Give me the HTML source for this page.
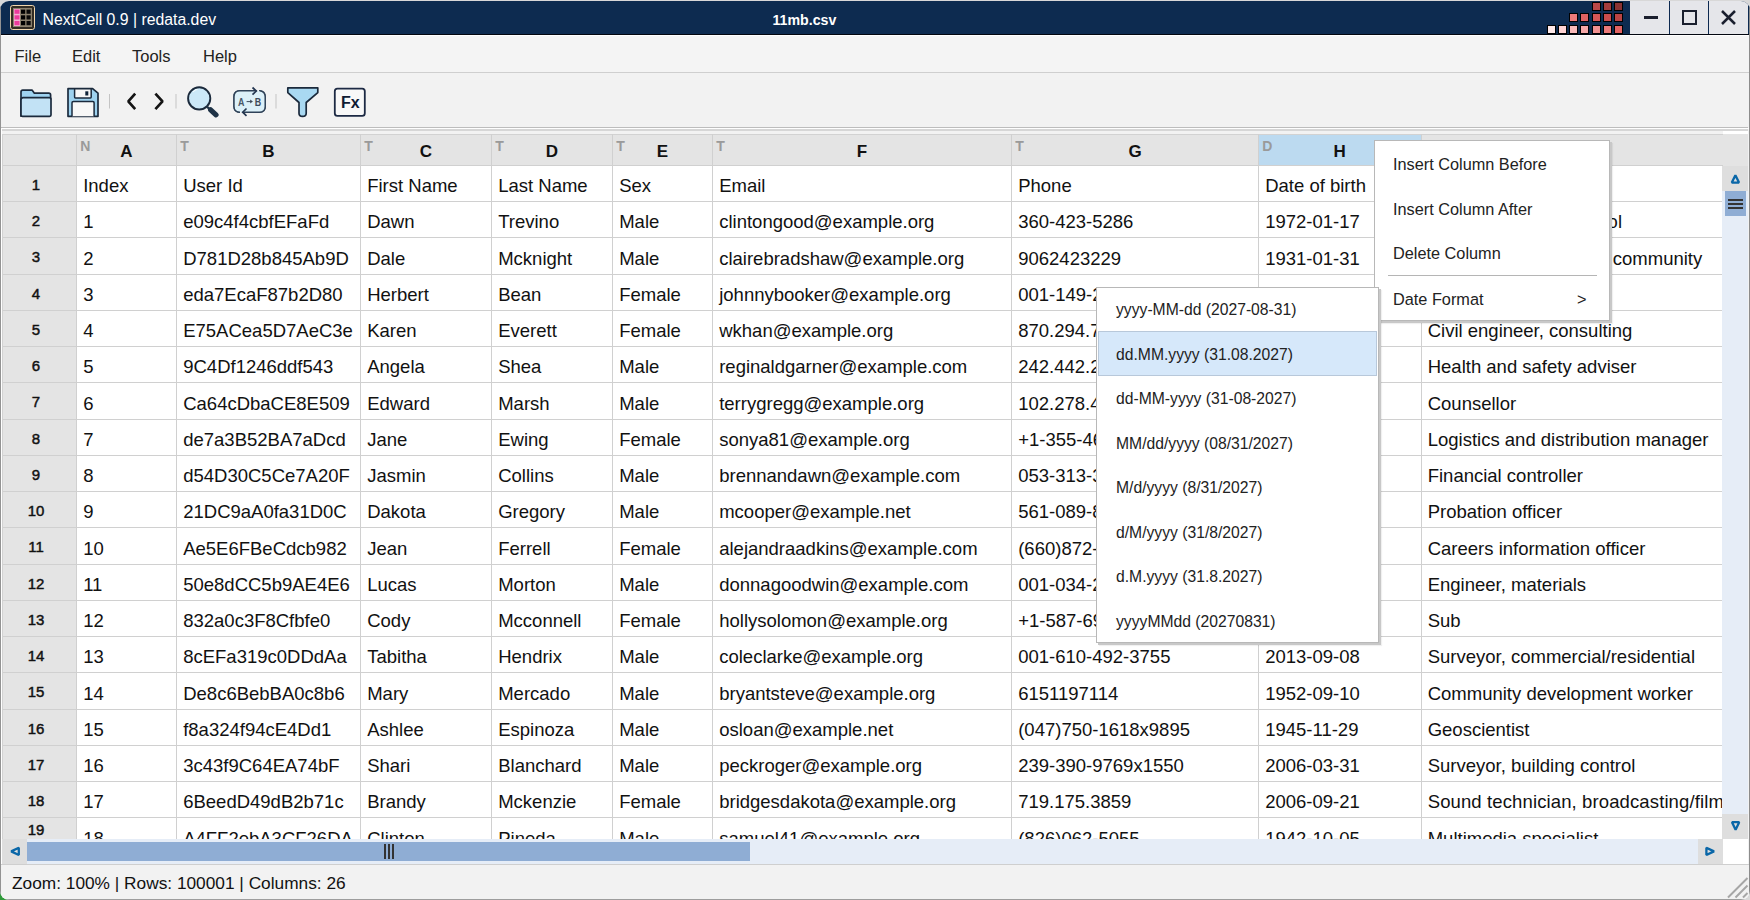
<!DOCTYPE html>
<html><head><meta charset="utf-8">
<style>
*{margin:0;padding:0;box-sizing:border-box}
html,body{width:1750px;height:900px;overflow:hidden;background:#d8d8d8;font-family:"Liberation Sans",sans-serif}
.abs{position:absolute}
#win{position:absolute;left:0;top:0;width:1750px;height:900px;background:#f2f2f2;clip-path:inset(1px 0 0 0 round 9px 9px 9px 9px)}
#title{position:absolute;left:0;top:0;width:1750px;height:34px;background:#0d2b50}
#tline{position:absolute;left:0;top:34px;width:1750px;height:1px;background:#03060f;box-shadow:0 1px 0 #fff}
#menubar{position:absolute;left:1px;top:36px;width:1748px;height:37px;background:#f4f4f4;border-bottom:1px solid #cfcfcf}
.menu{position:absolute;top:47px;font-size:16.5px;color:#222}
#toolbar{position:absolute;left:0px;top:73px;width:1748px;height:55px;background:#f2f2f2;border-bottom:1px solid #bdbdbd}
.gridwrap{position:absolute;left:0;top:0}
.hl{left:2px;width:1721px;height:1px;background:#d0d0d0}
.vl{top:134px;width:1px;height:705px;background:#d0d0d0}
.hdr{text-align:center;font-weight:bold;font-size:17px;color:#111;line-height:34px}
.typ{font-weight:bold;font-size:14px;color:#9a9a9a;line-height:14px}
.rn{left:-1px;width:74px;text-align:center;font-weight:normal;-webkit-text-stroke:0.45px #111;font-size:15px;color:#111;line-height:36px}
.cell{padding-left:6.2px;font-size:18.5px;color:#111;line-height:36px;white-space:nowrap;overflow:hidden}
.ctx{position:absolute;background:#fff;border:1px solid #b8b8b8;box-shadow:2px 2px 0 #c8c8c8,3px 3px 1px rgba(0,0,0,0.06)}
.mi{position:absolute;font-size:16.3px;color:#222;white-space:nowrap}
.si{position:absolute;left:19px;font-size:15.7px;color:#222;white-space:nowrap}
</style></head><body>
<div class="abs" style="left:0;top:860px;width:14px;height:40px;background:#2f9a3a"></div>
<div class="abs" style="left:14px;top:897px;width:700px;height:3px;background:linear-gradient(90deg,#2a8a6a,#5a3a9a,#a03060)"></div>
<div id="win">
<div id="title">
  <svg class="abs" style="left:0;top:0" width="40" height="36" viewBox="0 0 40 36">
    <rect x="10.5" y="5.5" width="24" height="24" rx="2.2" fill="#322c23" stroke="#f0d6ad" stroke-width="1"/>
    <rect x="13" y="8" width="19" height="19" fill="#8a806d"/>
    <rect x="14" y="9" width="6" height="17" fill="#f4b0d2"/>
    <rect x="14.5" y="9.6" width="5" height="4.2" fill="#ec3a9c"/><rect x="14.5" y="15.3" width="5" height="4.2" fill="#ec3a9c"/><rect x="14.5" y="21" width="5" height="4.2" fill="#ec3a9c"/>
    <rect x="21" y="9.6" width="4.2" height="4.2" fill="#000"/><rect x="21" y="15.3" width="4.2" height="4.2" fill="#000"/><rect x="21" y="21" width="4.2" height="4.2" fill="#000"/>
    <rect x="26.5" y="9.6" width="4.2" height="4.2" fill="#0a0a0a"/><rect x="26.5" y="15.3" width="4.2" height="4.2" fill="#0a0a0a"/><rect x="26.5" y="21" width="4.2" height="4.2" fill="#0a0a0a"/>
  </svg>
  <div class="abs" style="left:42.5px;top:11px;font-size:15.8px;color:#fff;white-space:nowrap">NextCell 0.9 | redata.dev</div>
  <div class="abs" style="left:772.5px;top:12px;font-size:14.2px;font-weight:bold;color:#fff;white-space:nowrap">11mb.csv</div>
  <div class="abs" style="left:1591.5px;top:2.3px;width:9px;height:9px;background:#b94848;border:1.3px solid #000"></div>
<div class="abs" style="left:1602.5px;top:2.3px;width:9px;height:9px;background:#a23d3d;border:1.3px solid #000"></div>
<div class="abs" style="left:1613.6px;top:2.3px;width:9px;height:9px;background:#8a3333;border:1.3px solid #000"></div>
<div class="abs" style="left:1569.3px;top:13.4px;width:9px;height:9px;background:#f07a7a;border:1.3px solid #000"></div>
<div class="abs" style="left:1580.4px;top:13.4px;width:9px;height:9px;background:#e06262;border:1.3px solid #000"></div>
<div class="abs" style="left:1591.5px;top:13.4px;width:9px;height:9px;background:#d55656;border:1.3px solid #000"></div>
<div class="abs" style="left:1602.5px;top:13.4px;width:9px;height:9px;background:#c84c4c;border:1.3px solid #000"></div>
<div class="abs" style="left:1613.6px;top:13.4px;width:9px;height:9px;background:#b94444;border:1.3px solid #000"></div>
<div class="abs" style="left:1547.2px;top:24.8px;width:9px;height:9px;background:#ffeaea;border:1.3px solid #000"></div>
<div class="abs" style="left:1558.3px;top:24.8px;width:9px;height:9px;background:#ffd4d4;border:1.3px solid #000"></div>
<div class="abs" style="left:1569.3px;top:24.8px;width:9px;height:9px;background:#f9b9b9;border:1.3px solid #000"></div>
<div class="abs" style="left:1580.4px;top:24.8px;width:9px;height:9px;background:#f5a7a7;border:1.3px solid #000"></div>
<div class="abs" style="left:1591.5px;top:24.8px;width:9px;height:9px;background:#f09090;border:1.3px solid #000"></div>
<div class="abs" style="left:1602.5px;top:24.8px;width:9px;height:9px;background:#ec7a7a;border:1.3px solid #000"></div>
<div class="abs" style="left:1613.6px;top:24.8px;width:9px;height:9px;background:#e26363;border:1.3px solid #000"></div>
  <div class="abs" style="left:1630px;top:0;width:118px;height:34px;background:#e5e6ea"></div>
  <div class="abs" style="left:1669px;top:0;width:1px;height:34px;background:#0c2950"></div>
  <div class="abs" style="left:1708px;top:0;width:1px;height:34px;background:#0c2950"></div>
  <div class="abs" style="left:1644px;top:16px;width:14px;height:2.5px;background:#1a1f2e"></div>
  <div class="abs" style="left:1682px;top:10px;width:15px;height:15px;border:2.5px solid #1a1f2e"></div>
  <svg class="abs" style="left:1721px;top:10px" width="15" height="15" viewBox="0 0 15 15"><path d="M1 1L14 14M14 1L1 14" stroke="#1a1f2e" stroke-width="2.5"/></svg>
</div>
<div id="tline"></div>
<div id="menubar"></div>
<div class="menu" style="left:14.5px">File</div>
<div class="menu" style="left:72px">Edit</div>
<div class="menu" style="left:132px">Tools</div>
<div class="menu" style="left:203px">Help</div>
<div id="toolbar"></div>

<svg class="abs" style="left:0;top:0" width="380" height="130" viewBox="0 0 380 130">
 <!-- folder -->
 <path d="M21 115.5 V92 Q21 90.2 22.8 90.2 H32.2 L34.4 93.2 H48.8 Q50.6 93.2 50.6 95 V99 H21 Z" fill="#9fd3f0" stroke="#1b2a3c" stroke-width="1.7" stroke-linejoin="round"/>
 <path d="M21 116.2 V100 Q21 97.6 23 97.6 H49.4 Q51 97.6 51 99.4 V115 Q51 116.3 49.6 116.3 H22.4 Q21 116.3 21 115 Z" fill="#c2e2f5" stroke="#1b2a3c" stroke-width="1.7" stroke-linejoin="round"/>
 <!-- save -->
 <path d="M68 88.7 H92.6 L98 93.2 V116.3 H68 Z" fill="#9ed2ef" stroke="#1b2a3c" stroke-width="1.7" stroke-linejoin="round"/>
 <rect x="74.6" y="88.7" width="16.6" height="9.2" rx="0.8" fill="#f7f7f7" stroke="#1b2a3c" stroke-width="1.5"/>
 <rect x="85.3" y="91.3" width="3" height="4.2" fill="#10243a"/>
 <path d="M72 116.3 V102.8 Q72 101.6 73.4 101.6 H92.8 Q94.1 101.6 94.1 102.8 V116.3" fill="#f7f7f7" stroke="#1b2a3c" stroke-width="1.5"/>
 <!-- separators -->
 <rect x="109" y="94" width="1" height="14.5" fill="#c4c4c4"/>
 <rect x="175.5" y="94" width="1" height="14.5" fill="#c4c4c4"/>
 <rect x="275.5" y="94" width="1" height="14.5" fill="#c4c4c4"/>
 <!-- chevrons -->
 <path d="M135.2 93.6 L128.3 101.4 L135.2 109.2" fill="none" stroke="#151515" stroke-width="2.7" stroke-linejoin="bevel"/>
 <path d="M155.4 93.6 L162.5 101.4 L155.4 109.2" fill="none" stroke="#151515" stroke-width="2.7" stroke-linejoin="bevel"/>
 <!-- magnifier -->
 <circle cx="199.2" cy="98.4" r="11.1" fill="#cbe8f8" stroke="#1b2a3c" stroke-width="1.9"/>
 <path d="M193 92 Q195 89.6 197.5 89.3" fill="none" stroke="#fff" stroke-width="1" opacity="0.9"/>
 <path d="M206.8 106.6 L210 109.4" stroke="#1e3246" stroke-width="2.2"/><path d="M210.6 109.8 L216 114.8" stroke="#1e3246" stroke-width="5.2" stroke-linecap="round"/>
 <!-- replace -->
 <path d="M256.5 90.8 H240 Q234 90.8 234 96.8 V106.5 Q234 112.2 240 112.2" fill="none" stroke="#2f4258" stroke-width="1.45"/>
 <path d="M242.8 112.2 H259.4 Q265.2 112.2 265.2 106.5 V96.8 Q265.2 90.8 259 90.6" fill="none" stroke="#2f4258" stroke-width="1.45"/>
 <path d="M240 90.8 H256.5 Q258.6 90.8 259.6 91.2 Q265.2 92.5 265.2 96.8 V106.5 Q265.2 112.2 259.4 112.2 H242.8 Q234 112.2 234 106.5 V96.8 Q234 90.8 240 90.8Z" fill="#dcf0f8" stroke="none"/>
 <path d="M256.5 90.8 H240 Q234 90.8 234 96.8 V106.5 Q234 112.2 240 112.2" fill="none" stroke="#2f4258" stroke-width="1.45"/>
 <path d="M243 112.2 H259.4 Q265.2 112.2 265.2 106.5 V96.8 Q265.2 91.5 259.5 90.6" fill="none" stroke="#2f4258" stroke-width="1.45"/>
 <path d="M252.5 87.5 L256.3 91 L252.5 94.6" fill="none" stroke="#243650" stroke-width="1.7"/>
 <path d="M246.5 108.5 L242.7 112.2 L246.5 115.8" fill="none" stroke="#243650" stroke-width="1.7"/>
 <text x="241.2" y="105.9" font-family="Liberation Sans" font-weight="bold" font-size="10.5" fill="#4a5868" text-anchor="middle" transform="translate(241.2 0) scale(0.85 1) translate(-241.2 0)">A</text>
 <text x="258" y="105.9" font-family="Liberation Sans" font-weight="bold" font-size="10.5" fill="#3d4a5a" text-anchor="middle" transform="translate(258 0) scale(0.85 1) translate(-258 0)">B</text>
 <path d="M246.6 101.6 H252.2" fill="none" stroke="#3d4a5a" stroke-width="1"/><path d="M250.2 99.6 L252.8 101.6 L250.2 103.6Z" fill="#3d4a5a"/>
 <!-- filter -->
 <path d="M287.8 87.8 H317.8 V92.6 L306.2 102.5 V113.2 Q306.2 116.4 302.6 116.4 Q299 116.4 299 113.2 V102.5 L287.8 92.6 Z" fill="#a9d9f2" stroke="#1b2a3c" stroke-width="1.7" stroke-linejoin="round"/>
 <!-- fx -->
 <rect x="334.8" y="88.7" width="30" height="27.2" rx="2.6" fill="#f8f8f8" stroke="#1d2a44" stroke-width="1.8"/>
 <text x="341" y="107.8" font-family="Liberation Sans" font-weight="bold" font-size="16" fill="#0f1b33">Fx</text>
</svg>
<div class="abs" style="left:1px;top:128px;width:1748px;height:1px;background:#fff"></div>
<div class="abs" style="left:2px;top:129px;width:1746px;height:2px;background:#d6d6d6"></div>
<div class="gridwrap">
<div class="abs" style="left:2px;top:134px;width:1746px;height:32px;background:#e4e4e4"></div>
<div class="abs" style="left:2px;top:134px;width:1721px;height:1px;background:#d2d2d2"></div>
<div class="abs" style="left:1723px;top:131px;width:25px;height:3px;background:#fff"></div>
<div class="abs" style="left:1259.0px;top:135px;width:162.0px;height:30.5px;background:#bcdaf0"></div>
<div class="abs" style="left:2px;top:166px;width:74.5px;height:673px;background:#e4e4e4"></div>
<div class="abs" style="left:77px;top:166px;width:1646px;height:673px;background:#fff"></div>
<div class="abs hl" style="top:164.90px;"></div>
<div class="abs hl" style="top:201.15px;"></div>
<div class="abs hl" style="top:237.40px;"></div>
<div class="abs hl" style="top:273.65px;"></div>
<div class="abs hl" style="top:309.90px;"></div>
<div class="abs hl" style="top:346.15px;"></div>
<div class="abs hl" style="top:382.40px;"></div>
<div class="abs hl" style="top:418.65px;"></div>
<div class="abs hl" style="top:454.90px;"></div>
<div class="abs hl" style="top:491.15px;"></div>
<div class="abs hl" style="top:527.40px;"></div>
<div class="abs hl" style="top:563.65px;"></div>
<div class="abs hl" style="top:599.90px;"></div>
<div class="abs hl" style="top:636.15px;"></div>
<div class="abs hl" style="top:672.40px;"></div>
<div class="abs hl" style="top:708.65px;"></div>
<div class="abs hl" style="top:744.90px;"></div>
<div class="abs hl" style="top:781.15px;"></div>
<div class="abs hl" style="top:817.40px;"></div>
<div class="abs vl" style="left:76.00px;"></div>
<div class="abs vl" style="left:176.00px;"></div>
<div class="abs vl" style="left:360.00px;"></div>
<div class="abs vl" style="left:491.00px;"></div>
<div class="abs vl" style="left:612.00px;"></div>
<div class="abs vl" style="left:712.00px;"></div>
<div class="abs vl" style="left:1011.00px;"></div>
<div class="abs vl" style="left:1258.00px;"></div>
<div class="abs vl" style="left:1420.50px;"></div>
<div class="abs" style="left:2px;top:134px;width:1px;height:705px;background:#d2d2d2"></div>
<div class="abs hdr" style="left:76.5px;width:100.0px;top:135px;">A</div>
<div class="abs typ" style="left:80.3px;top:139px;">N</div>
<div class="abs hdr" style="left:176.5px;width:184.0px;top:135px;">B</div>
<div class="abs typ" style="left:180.3px;top:139px;">T</div>
<div class="abs hdr" style="left:360.5px;width:131.0px;top:135px;">C</div>
<div class="abs typ" style="left:364.3px;top:139px;">T</div>
<div class="abs hdr" style="left:491.5px;width:121.0px;top:135px;">D</div>
<div class="abs typ" style="left:495.3px;top:139px;">T</div>
<div class="abs hdr" style="left:612.5px;width:100.0px;top:135px;">E</div>
<div class="abs typ" style="left:616.3px;top:139px;">T</div>
<div class="abs hdr" style="left:712.5px;width:299.0px;top:135px;">F</div>
<div class="abs typ" style="left:716.3px;top:139px;">T</div>
<div class="abs hdr" style="left:1011.5px;width:247.0px;top:135px;">G</div>
<div class="abs typ" style="left:1015.3px;top:139px;">T</div>
<div class="abs hdr" style="left:1258.5px;width:162.5px;top:135px;">H</div>
<div class="abs typ" style="left:1262.3px;top:139px;">D</div>
<div class="abs hdr" style="left:1421px;width:302px;top:135px;">I</div>
<div class="abs typ" style="left:1424.8px;top:139px;">T</div>
<div class="abs rn" style="top:166.90px;">1</div>
<div class="abs rn" style="top:203.15px;">2</div>
<div class="abs rn" style="top:239.40px;">3</div>
<div class="abs rn" style="top:275.65px;">4</div>
<div class="abs rn" style="top:311.90px;">5</div>
<div class="abs rn" style="top:348.15px;">6</div>
<div class="abs rn" style="top:384.40px;">7</div>
<div class="abs rn" style="top:420.65px;">8</div>
<div class="abs rn" style="top:456.90px;">9</div>
<div class="abs rn" style="top:493.15px;">10</div>
<div class="abs rn" style="top:529.40px;">11</div>
<div class="abs rn" style="top:565.65px;">12</div>
<div class="abs rn" style="top:601.90px;">13</div>
<div class="abs rn" style="top:638.15px;">14</div>
<div class="abs rn" style="top:674.40px;">15</div>
<div class="abs rn" style="top:710.65px;">16</div>
<div class="abs rn" style="top:746.90px;">17</div>
<div class="abs rn" style="top:783.15px;">18</div>
<div class="abs rn" style="top:812.00px;">19</div>
<div class="abs cell" style="left:77.0px;top:168.10px;width:99.0px;">Index</div>
<div class="abs cell" style="left:177.0px;top:168.10px;width:183.0px;">User Id</div>
<div class="abs cell" style="left:361.0px;top:168.10px;width:130.0px;">First Name</div>
<div class="abs cell" style="left:492.0px;top:168.10px;width:120.0px;">Last Name</div>
<div class="abs cell" style="left:613.0px;top:168.10px;width:99.0px;">Sex</div>
<div class="abs cell" style="left:713.0px;top:168.10px;width:298.0px;">Email</div>
<div class="abs cell" style="left:1012.0px;top:168.10px;width:246.0px;">Phone</div>
<div class="abs cell" style="left:1259.0px;top:168.10px;width:161.5px;">Date of birth</div>
<div class="abs cell" style="left:1421.5px;top:168.10px;width:301px;">Job Title</div>
<div class="abs cell" style="left:77.0px;top:204.35px;width:99.0px;">1</div>
<div class="abs cell" style="left:177.0px;top:204.35px;width:183.0px;">e09c4f4cbfEFaFd</div>
<div class="abs cell" style="left:361.0px;top:204.35px;width:130.0px;">Dawn</div>
<div class="abs cell" style="left:492.0px;top:204.35px;width:120.0px;">Trevino</div>
<div class="abs cell" style="left:613.0px;top:204.35px;width:99.0px;">Male</div>
<div class="abs cell" style="left:713.0px;top:204.35px;width:298.0px;">clintongood@example.org</div>
<div class="abs cell" style="left:1012.0px;top:204.35px;width:246.0px;">360-423-5286</div>
<div class="abs cell" style="left:1259.0px;top:204.35px;width:161.5px;">1972-01-17</div>
<div class="abs cell" style="left:1421.5px;top:204.35px;width:301px;letter-spacing:0.14px;">Teacher, special school</div>
<div class="abs cell" style="left:77.0px;top:240.60px;width:99.0px;">2</div>
<div class="abs cell" style="left:177.0px;top:240.60px;width:183.0px;">D781D28b845Ab9D</div>
<div class="abs cell" style="left:361.0px;top:240.60px;width:130.0px;">Dale</div>
<div class="abs cell" style="left:492.0px;top:240.60px;width:120.0px;">Mcknight</div>
<div class="abs cell" style="left:613.0px;top:240.60px;width:99.0px;">Male</div>
<div class="abs cell" style="left:713.0px;top:240.60px;width:298.0px;">clairebradshaw@example.org</div>
<div class="abs cell" style="left:1012.0px;top:240.60px;width:246.0px;">9062423229</div>
<div class="abs cell" style="left:1259.0px;top:240.60px;width:161.5px;">1931-01-31</div>
<div class="abs cell" style="left:1421.5px;top:240.60px;width:301px;">Psychotherapist, child community</div>
<div class="abs cell" style="left:77.0px;top:276.85px;width:99.0px;">3</div>
<div class="abs cell" style="left:177.0px;top:276.85px;width:183.0px;">eda7EcaF87b2D80</div>
<div class="abs cell" style="left:361.0px;top:276.85px;width:130.0px;">Herbert</div>
<div class="abs cell" style="left:492.0px;top:276.85px;width:120.0px;">Bean</div>
<div class="abs cell" style="left:613.0px;top:276.85px;width:99.0px;">Female</div>
<div class="abs cell" style="left:713.0px;top:276.85px;width:298.0px;">johnnybooker@example.org</div>
<div class="abs cell" style="left:1012.0px;top:276.85px;width:246.0px;">001-149-244-6133</div>
<div class="abs cell" style="left:1259.0px;top:276.85px;width:161.5px;">1987-03-09</div>
<div class="abs cell" style="left:1421.5px;top:276.85px;width:301px;">Pharmacist</div>
<div class="abs cell" style="left:77.0px;top:313.10px;width:99.0px;">4</div>
<div class="abs cell" style="left:177.0px;top:313.10px;width:183.0px;">E75ACea5D7AeC3e</div>
<div class="abs cell" style="left:361.0px;top:313.10px;width:130.0px;">Karen</div>
<div class="abs cell" style="left:492.0px;top:313.10px;width:120.0px;">Everett</div>
<div class="abs cell" style="left:613.0px;top:313.10px;width:99.0px;">Female</div>
<div class="abs cell" style="left:713.0px;top:313.10px;width:298.0px;">wkhan@example.org</div>
<div class="abs cell" style="left:1012.0px;top:313.10px;width:246.0px;">870.294.7513</div>
<div class="abs cell" style="left:1259.0px;top:313.10px;width:161.5px;">1996-10-14</div>
<div class="abs cell" style="left:1421.5px;top:313.10px;width:301px;">Civil engineer, consulting</div>
<div class="abs cell" style="left:77.0px;top:349.35px;width:99.0px;">5</div>
<div class="abs cell" style="left:177.0px;top:349.35px;width:183.0px;">9C4Df1246ddf543</div>
<div class="abs cell" style="left:361.0px;top:349.35px;width:130.0px;">Angela</div>
<div class="abs cell" style="left:492.0px;top:349.35px;width:120.0px;">Shea</div>
<div class="abs cell" style="left:613.0px;top:349.35px;width:99.0px;">Male</div>
<div class="abs cell" style="left:713.0px;top:349.35px;width:298.0px;">reginaldgarner@example.com</div>
<div class="abs cell" style="left:1012.0px;top:349.35px;width:246.0px;">242.442.2093</div>
<div class="abs cell" style="left:1259.0px;top:349.35px;width:161.5px;">1912-03-01</div>
<div class="abs cell" style="left:1421.5px;top:349.35px;width:301px;">Health and safety adviser</div>
<div class="abs cell" style="left:77.0px;top:385.60px;width:99.0px;">6</div>
<div class="abs cell" style="left:177.0px;top:385.60px;width:183.0px;">Ca64cDbaCE8E509</div>
<div class="abs cell" style="left:361.0px;top:385.60px;width:130.0px;">Edward</div>
<div class="abs cell" style="left:492.0px;top:385.60px;width:120.0px;">Marsh</div>
<div class="abs cell" style="left:613.0px;top:385.60px;width:99.0px;">Male</div>
<div class="abs cell" style="left:713.0px;top:385.60px;width:298.0px;">terrygregg@example.org</div>
<div class="abs cell" style="left:1012.0px;top:385.60px;width:246.0px;">102.278.4518</div>
<div class="abs cell" style="left:1259.0px;top:385.60px;width:161.5px;">1916-05-22</div>
<div class="abs cell" style="left:1421.5px;top:385.60px;width:301px;">Counsellor</div>
<div class="abs cell" style="left:77.0px;top:421.85px;width:99.0px;">7</div>
<div class="abs cell" style="left:177.0px;top:421.85px;width:183.0px;">de7a3B52BA7aDcd</div>
<div class="abs cell" style="left:361.0px;top:421.85px;width:130.0px;">Jane</div>
<div class="abs cell" style="left:492.0px;top:421.85px;width:120.0px;">Ewing</div>
<div class="abs cell" style="left:613.0px;top:421.85px;width:99.0px;">Female</div>
<div class="abs cell" style="left:713.0px;top:421.85px;width:298.0px;">sonya81@example.org</div>
<div class="abs cell" style="left:1012.0px;top:421.85px;width:246.0px;">+1-355-461-5213</div>
<div class="abs cell" style="left:1259.0px;top:421.85px;width:161.5px;">1985-04-14</div>
<div class="abs cell" style="left:1421.5px;top:421.85px;width:301px;">Logistics and distribution manager</div>
<div class="abs cell" style="left:77.0px;top:458.10px;width:99.0px;">8</div>
<div class="abs cell" style="left:177.0px;top:458.10px;width:183.0px;">d54D30C5Ce7A20F</div>
<div class="abs cell" style="left:361.0px;top:458.10px;width:130.0px;">Jasmin</div>
<div class="abs cell" style="left:492.0px;top:458.10px;width:120.0px;">Collins</div>
<div class="abs cell" style="left:613.0px;top:458.10px;width:99.0px;">Male</div>
<div class="abs cell" style="left:713.0px;top:458.10px;width:298.0px;">brennandawn@example.com</div>
<div class="abs cell" style="left:1012.0px;top:458.10px;width:246.0px;">053-313-3590</div>
<div class="abs cell" style="left:1259.0px;top:458.10px;width:161.5px;">1970-06-02</div>
<div class="abs cell" style="left:1421.5px;top:458.10px;width:301px;">Financial controller</div>
<div class="abs cell" style="left:77.0px;top:494.35px;width:99.0px;">9</div>
<div class="abs cell" style="left:177.0px;top:494.35px;width:183.0px;">21DC9aA0fa31D0C</div>
<div class="abs cell" style="left:361.0px;top:494.35px;width:130.0px;">Dakota</div>
<div class="abs cell" style="left:492.0px;top:494.35px;width:120.0px;">Gregory</div>
<div class="abs cell" style="left:613.0px;top:494.35px;width:99.0px;">Male</div>
<div class="abs cell" style="left:713.0px;top:494.35px;width:298.0px;">mcooper@example.net</div>
<div class="abs cell" style="left:1012.0px;top:494.35px;width:246.0px;">561-089-8446</div>
<div class="abs cell" style="left:1259.0px;top:494.35px;width:161.5px;">1948-12-12</div>
<div class="abs cell" style="left:1421.5px;top:494.35px;width:301px;">Probation officer</div>
<div class="abs cell" style="left:77.0px;top:530.60px;width:99.0px;">10</div>
<div class="abs cell" style="left:177.0px;top:530.60px;width:183.0px;">Ae5E6FBeCdcb982</div>
<div class="abs cell" style="left:361.0px;top:530.60px;width:130.0px;">Jean</div>
<div class="abs cell" style="left:492.0px;top:530.60px;width:120.0px;">Ferrell</div>
<div class="abs cell" style="left:613.0px;top:530.60px;width:99.0px;">Female</div>
<div class="abs cell" style="left:713.0px;top:530.60px;width:298.0px;">alejandraadkins@example.com</div>
<div class="abs cell" style="left:1012.0px;top:530.60px;width:246.0px;">(660)872-0395</div>
<div class="abs cell" style="left:1259.0px;top:530.60px;width:161.5px;">1979-05-11</div>
<div class="abs cell" style="left:1421.5px;top:530.60px;width:301px;">Careers information officer</div>
<div class="abs cell" style="left:77.0px;top:566.85px;width:99.0px;">11</div>
<div class="abs cell" style="left:177.0px;top:566.85px;width:183.0px;">50e8dCC5b9AE4E6</div>
<div class="abs cell" style="left:361.0px;top:566.85px;width:130.0px;">Lucas</div>
<div class="abs cell" style="left:492.0px;top:566.85px;width:120.0px;">Morton</div>
<div class="abs cell" style="left:613.0px;top:566.85px;width:99.0px;">Male</div>
<div class="abs cell" style="left:713.0px;top:566.85px;width:298.0px;">donnagoodwin@example.com</div>
<div class="abs cell" style="left:1012.0px;top:566.85px;width:246.0px;">001-034-298-4401</div>
<div class="abs cell" style="left:1259.0px;top:566.85px;width:161.5px;">1938-08-25</div>
<div class="abs cell" style="left:1421.5px;top:566.85px;width:301px;">Engineer, materials</div>
<div class="abs cell" style="left:77.0px;top:603.10px;width:99.0px;">12</div>
<div class="abs cell" style="left:177.0px;top:603.10px;width:183.0px;">832a0c3F8Cfbfe0</div>
<div class="abs cell" style="left:361.0px;top:603.10px;width:130.0px;">Cody</div>
<div class="abs cell" style="left:492.0px;top:603.10px;width:120.0px;">Mcconnell</div>
<div class="abs cell" style="left:613.0px;top:603.10px;width:99.0px;">Female</div>
<div class="abs cell" style="left:713.0px;top:603.10px;width:298.0px;">hollysolomon@example.org</div>
<div class="abs cell" style="left:1012.0px;top:603.10px;width:246.0px;">+1-587-690-8231</div>
<div class="abs cell" style="left:1259.0px;top:603.10px;width:161.5px;">1934-02-04</div>
<div class="abs cell" style="left:1421.5px;top:603.10px;width:301px;">Sub</div>
<div class="abs cell" style="left:77.0px;top:639.35px;width:99.0px;">13</div>
<div class="abs cell" style="left:177.0px;top:639.35px;width:183.0px;">8cEFa319c0DDdAa</div>
<div class="abs cell" style="left:361.0px;top:639.35px;width:130.0px;">Tabitha</div>
<div class="abs cell" style="left:492.0px;top:639.35px;width:120.0px;">Hendrix</div>
<div class="abs cell" style="left:613.0px;top:639.35px;width:99.0px;">Male</div>
<div class="abs cell" style="left:713.0px;top:639.35px;width:298.0px;">coleclarke@example.org</div>
<div class="abs cell" style="left:1012.0px;top:639.35px;width:246.0px;">001-610-492-3755</div>
<div class="abs cell" style="left:1259.0px;top:639.35px;width:161.5px;">2013-09-08</div>
<div class="abs cell" style="left:1421.5px;top:639.35px;width:301px;">Surveyor, commercial/residential</div>
<div class="abs cell" style="left:77.0px;top:675.60px;width:99.0px;">14</div>
<div class="abs cell" style="left:177.0px;top:675.60px;width:183.0px;">De8c6BebBA0c8b6</div>
<div class="abs cell" style="left:361.0px;top:675.60px;width:130.0px;">Mary</div>
<div class="abs cell" style="left:492.0px;top:675.60px;width:120.0px;">Mercado</div>
<div class="abs cell" style="left:613.0px;top:675.60px;width:99.0px;">Male</div>
<div class="abs cell" style="left:713.0px;top:675.60px;width:298.0px;">bryantsteve@example.org</div>
<div class="abs cell" style="left:1012.0px;top:675.60px;width:246.0px;">6151197114</div>
<div class="abs cell" style="left:1259.0px;top:675.60px;width:161.5px;">1952-09-10</div>
<div class="abs cell" style="left:1421.5px;top:675.60px;width:301px;">Community development worker</div>
<div class="abs cell" style="left:77.0px;top:711.85px;width:99.0px;">15</div>
<div class="abs cell" style="left:177.0px;top:711.85px;width:183.0px;">f8a324f94cE4Dd1</div>
<div class="abs cell" style="left:361.0px;top:711.85px;width:130.0px;">Ashlee</div>
<div class="abs cell" style="left:492.0px;top:711.85px;width:120.0px;">Espinoza</div>
<div class="abs cell" style="left:613.0px;top:711.85px;width:99.0px;">Male</div>
<div class="abs cell" style="left:713.0px;top:711.85px;width:298.0px;">osloan@example.net</div>
<div class="abs cell" style="left:1012.0px;top:711.85px;width:246.0px;">(047)750-1618x9895</div>
<div class="abs cell" style="left:1259.0px;top:711.85px;width:161.5px;">1945-11-29</div>
<div class="abs cell" style="left:1421.5px;top:711.85px;width:301px;">Geoscientist</div>
<div class="abs cell" style="left:77.0px;top:748.10px;width:99.0px;">16</div>
<div class="abs cell" style="left:177.0px;top:748.10px;width:183.0px;">3c43f9C64EA74bF</div>
<div class="abs cell" style="left:361.0px;top:748.10px;width:130.0px;">Shari</div>
<div class="abs cell" style="left:492.0px;top:748.10px;width:120.0px;">Blanchard</div>
<div class="abs cell" style="left:613.0px;top:748.10px;width:99.0px;">Male</div>
<div class="abs cell" style="left:713.0px;top:748.10px;width:298.0px;">peckroger@example.org</div>
<div class="abs cell" style="left:1012.0px;top:748.10px;width:246.0px;">239-390-9769x1550</div>
<div class="abs cell" style="left:1259.0px;top:748.10px;width:161.5px;">2006-03-31</div>
<div class="abs cell" style="left:1421.5px;top:748.10px;width:301px;">Surveyor, building control</div>
<div class="abs cell" style="left:77.0px;top:784.35px;width:99.0px;">17</div>
<div class="abs cell" style="left:177.0px;top:784.35px;width:183.0px;">6BeedD49dB2b71c</div>
<div class="abs cell" style="left:361.0px;top:784.35px;width:130.0px;">Brandy</div>
<div class="abs cell" style="left:492.0px;top:784.35px;width:120.0px;">Mckenzie</div>
<div class="abs cell" style="left:613.0px;top:784.35px;width:99.0px;">Female</div>
<div class="abs cell" style="left:713.0px;top:784.35px;width:298.0px;">bridgesdakota@example.org</div>
<div class="abs cell" style="left:1012.0px;top:784.35px;width:246.0px;">719.175.3859</div>
<div class="abs cell" style="left:1259.0px;top:784.35px;width:161.5px;">2006-09-21</div>
<div class="abs cell" style="left:1421.5px;top:784.35px;width:301px;letter-spacing:0.12px;">Sound technician, broadcasting/film</div>
<div class="abs cell" style="left:77.0px;top:820.60px;width:99.0px;">18</div>
<div class="abs cell" style="left:177.0px;top:820.60px;width:183.0px;">A4FF2ebA3CF26DA</div>
<div class="abs cell" style="left:361.0px;top:820.60px;width:130.0px;">Clinton</div>
<div class="abs cell" style="left:492.0px;top:820.60px;width:120.0px;">Pineda</div>
<div class="abs cell" style="left:613.0px;top:820.60px;width:99.0px;">Male</div>
<div class="abs cell" style="left:713.0px;top:820.60px;width:298.0px;">samuel41@example.org</div>
<div class="abs cell" style="left:1012.0px;top:820.60px;width:246.0px;">(826)062-5055</div>
<div class="abs cell" style="left:1259.0px;top:820.60px;width:161.5px;">1942-10-05</div>
<div class="abs cell" style="left:1421.5px;top:820.60px;width:301px;">Multimedia specialist</div>
</div>
<!-- vertical scrollbar -->
<div class="abs" style="left:1722px;top:166px;width:26px;height:673px;background:#e6edf7"></div>
<div class="abs" style="left:1722px;top:166px;width:26px;height:25px;background:#dedede"></div>

<div class="abs" style="left:1724.5px;top:191px;width:21px;height:25px;background:#8fadd4"></div>
<div class="abs" style="left:1728px;top:198.5px;width:15px;height:2px;background:#333"></div>
<div class="abs" style="left:1728px;top:202.5px;width:15px;height:2px;background:#333"></div>
<div class="abs" style="left:1728px;top:206.5px;width:15px;height:2px;background:#333"></div>
<div class="abs" style="left:1722px;top:814px;width:26px;height:25px;background:#dedede"></div>

<!-- horizontal scrollbar -->
<div class="abs" style="left:2px;top:839px;width:1721px;height:25px;background:#e6edf7"></div>
<div class="abs" style="left:2px;top:839px;width:25px;height:25px;background:#dedede"></div>

<div class="abs" style="left:27px;top:842px;width:723px;height:19px;background:#8fadd4"></div>
<div class="abs" style="left:384px;top:844px;width:2px;height:15px;background:#333"></div>
<div class="abs" style="left:388px;top:844px;width:2px;height:15px;background:#333"></div>
<div class="abs" style="left:391.5px;top:844px;width:2px;height:15px;background:#333"></div>
<div class="abs" style="left:1698px;top:839px;width:25px;height:25px;background:#dedede"></div>

<div class="abs" style="left:1723px;top:839px;width:25px;height:25px;background:#fff"></div>
<!-- status bar -->
<div class="abs" style="left:1px;top:864px;width:1748px;height:1px;background:#cfcfcf"></div>
<div class="abs" style="left:1px;top:865px;width:1748px;height:34px;background:#f2f2f2"></div>
<div class="abs" style="left:12px;top:873px;font-size:17.3px;color:#111;white-space:nowrap">Zoom: 100% | Rows: 100001 | Columns: 26</div>
<svg class="abs" style="left:0;top:0" width="1750" height="900" viewBox="0 0 1750 900">
 <g fill="none" stroke="#0a67a8" stroke-width="2.3" stroke-linejoin="bevel">
  <path d="M1735.4 175.2 L1739 182.6 H1731.8 Z"/>
  <path d="M1735.6 829.8 L1739.2 822.2 H1732 Z"/>
  <path d="M11.2 851.4 L18.8 847.8 V855 Z"/>
  <path d="M1714 851.4 L1706.4 847.8 V855 Z"/>
 </g>
 <g stroke="#a6a6a6" stroke-width="2">
  <path d="M1728 897.5 L1747.5 878"/><path d="M1735.5 897.5 L1747.5 885.5"/><path d="M1743 897.5 L1747.5 893"/>
 </g>
</svg>
<div class="abs" style="left:0;top:0;width:1px;height:900px;background:#939393"></div>
<div class="abs" style="left:1749px;top:0;width:1px;height:900px;background:#8c8c8c"></div>
<div class="abs" style="left:0;top:899px;width:1750px;height:1px;background:#9d9d9d"></div>
<div class="abs" style="left:1px;top:128px;width:1px;height:736px;background:#fff"></div>
<!-- context menu -->
<div class="ctx" style="left:1374px;top:140px;width:236px;height:181px"></div>
<div class="mi" style="left:1393px;top:155px">Insert Column Before</div>
<div class="mi" style="left:1393px;top:200px">Insert Column After</div>
<div class="mi" style="left:1393px;top:244px">Delete Column</div>
<div class="abs" style="left:1388px;top:275px;width:209px;height:1px;background:#b5b5b5"></div>
<div class="mi" style="left:1393px;top:290px">Date Format</div>
<div class="mi" style="left:1577px;top:290px">&gt;</div>
<!-- submenu -->
<div class="ctx" style="left:1096px;top:287px;width:283px;height:356px">
 <div class="abs" style="left:1px;top:43px;width:279px;height:45px;background:#d6e8fa;border:1px solid #b8c8da"></div>
 <div class="si" style="top:13px">yyyy-MM-dd (2027-08-31)</div>
 <div class="si" style="top:58px">dd.MM.yyyy (31.08.2027)</div>
 <div class="si" style="top:102px">dd-MM-yyyy (31-08-2027)</div>
 <div class="si" style="top:147px">MM/dd/yyyy (08/31/2027)</div>
 <div class="si" style="top:191px">M/d/yyyy (8/31/2027)</div>
 <div class="si" style="top:236px">d/M/yyyy (31/8/2027)</div>
 <div class="si" style="top:280px">d.M.yyyy (31.8.2027)</div>
 <div class="si" style="top:325px">yyyyMMdd (20270831)</div>
</div>
</div>
</body></html>
